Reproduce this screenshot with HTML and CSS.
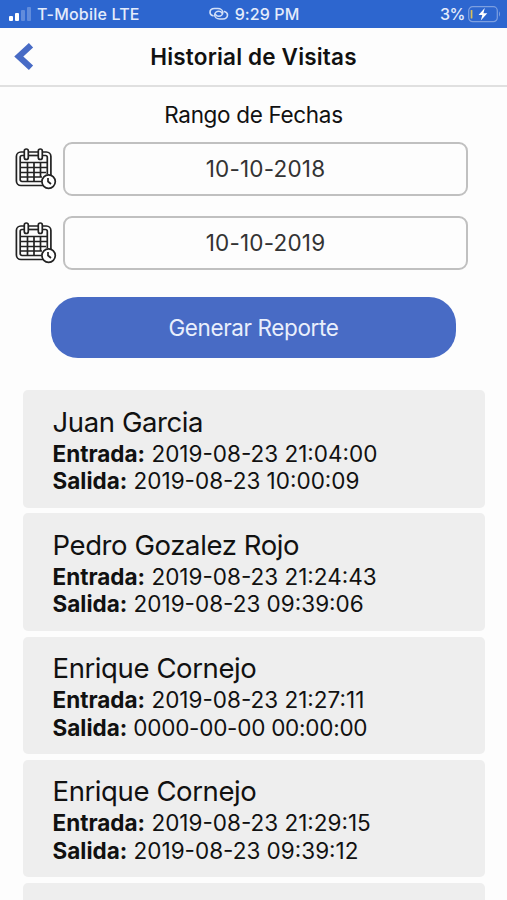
FILE: index.html
```
<!DOCTYPE html>
<html lang="es">
  <head>
    <meta charset="UTF-8" />
    <meta name="viewport" content="width=device-width, initial-scale=1.0" />
    <title>Historial de Visitas</title>
    <link rel="stylesheet" href="styles.css">
  </head>
  <body>
    <!-- Shared calendar icon -->
    <svg class="sprite" width="0" height="0">
      <symbol id="calendar" viewBox="0 0 42 42">
        <g fill="none" stroke="#222" stroke-width="1.7">
          <rect x="1.4" y="4" width="34.5" height="33.5" rx="4.5" />
          <path d="M9.5 7.5H7a1.800 1.800 0 0 0-1.800 1.800v22.400a1.800 1.800 0 0 0 1.800 1.800h22M27.500 7.500h3a1.800 1.800 0 0 1 1.800 1.800v17" />
          <path d="M5 14.500h27M5 19.500h27M5 24.500h26M5 29h22M12.500 14.500v19M19 14.500v19M25.500 14.500v15" />
          <path d="M14 7.500h9" />
          <rect x="9.300" y="1" width="4" height="10.500" rx="2" fill="#fff" />
          <rect x="23.300" y="1" width="4" height="10.500" rx="2" fill="#fff" />
          <circle cx="33.600" cy="33.600" r="6.700" fill="#fff" />
          <path d="M33 30v3.500l3 2.500" />
        </g>
      </symbol>
    </svg>

    <div class="status-bar">
      <div class="status-left">
        <svg width="24" height="14" viewBox="0 0 24 14" fill="#fff">
          <rect x="0" y="9" width="4" height="5" rx="1" />
          <rect x="6" y="6" width="4" height="8" rx="1" />
          <rect x="12" y="3" width="4" height="11" rx="1" opacity="0.25" />
          <rect x="18" y="0" width="4" height="14" rx="1" opacity="0.25" />
        </svg>
        <span class="carrier">T-Mobile LTE</span>
      </div>
      <div class="status-center">
        <svg width="20" height="14" viewBox="0 0 20 14" fill="none" stroke="#d3e0f8" stroke-width="1.6" stroke-linecap="round">
          <path d="M4 8.800C2 8.300 1 7 1 5.300 1 3 3 1.500 5.500 1.500h3.300c3 0 5 2 5 4 0 2.200-2 3.700-4 3.700-1.600 0-2.800-.8-3.200-1.700" />
          <path d="M15.500 4.500c2 .6 3 1.800 3 3.600 0 2.300-2 3.900-4.500 3.900h-3.300c-3 0-5-2-5-4 0-2.200 2-3.700 4-3.700 1.600 0 2.800.8 3.200 1.700" />
        </svg>
        <span class="time">9:29 PM</span>
      </div>
      <div class="status-right">
        <span class="percent">3%</span>
        <svg width="33" height="17" viewBox="0 0 33 17">
          <rect x="0.700" y="0.700" width="28.600" height="15" rx="4" fill="none" stroke="#7d9fe0" stroke-width="1.200" />
          <path d="M31 5.500c1.300.5 1.300 4.500 0 5z" fill="#7d9fe0" />
          <rect x="2.700" y="4" width="1.700" height="8.500" rx="0.600" fill="#d9bf5a" />
          <path d="M16.800 2 10.500 9h3.800l-1.500 5.500L19.300 7.300h-3.900z" fill="#fff" />
        </svg>
      </div>
    </div>

    <div class="header">
      <svg class="back" width="20" height="30" viewBox="0 0 20 30">
        <path d="M17 3.200 4.800 14.500l12.200 11.300" fill="none" stroke="#486bc5" stroke-width="6.200" />
      </svg>
      <h1>Historial de Visitas</h1>
    </div>

    <div class="filters">
      <p class="label">Rango de Fechas</p>
      <div class="date-row">
        <svg class="icon" width="42" height="42"><use href="#calendar" /></svg>
        <div class="date-input">10-10-2018</div>
      </div>
      <div class="date-row">
        <svg class="icon" width="42" height="42"><use href="#calendar" /></svg>
        <div class="date-input">10-10-2019</div>
      </div>
      <button class="btn">Generar Reporte</button>
    </div>

    <div class="list">
      <div class="card">
        <h2>Juan Garcia</h2>
        <p><strong>Entrada:</strong> 2019-08-23 21:04:00</p>
        <p><strong>Salida:</strong> 2019-08-23 10:00:09</p>
      </div>
      <div class="card">
        <h2>Pedro Gozalez Rojo</h2>
        <p><strong>Entrada:</strong> 2019-08-23 21:24:43</p>
        <p><strong>Salida:</strong> 2019-08-23 09:39:06</p>
      </div>
      <div class="card">
        <h2>Enrique Cornejo</h2>
        <p><strong>Entrada:</strong> 2019-08-23 21:27:11</p>
        <p class="empty"><strong>Salida:</strong> 0000-00-00 00:00:00</p>
      </div>
      <div class="card">
        <h2>Enrique Cornejo</h2>
        <p><strong>Entrada:</strong> 2019-08-23 21:29:15</p>
        <p><strong>Salida:</strong> 2019-08-23 09:39:12</p>
      </div>
      <div class="card last"></div>
    </div>
  </body>
</html>
```

FILE: styles.css
```
* {
  margin: 0;
  padding: 0;
  box-sizing: border-box;
}

body {
  height: 900px;
  overflow: hidden;
  background-color: #fdfdfd;
  color: #111;
  font-family: Inter, "Liberation Sans", sans-serif;
}

.sprite {
  display: block;
}

.status-bar {
  display: grid;
  grid-template-columns: 1fr auto 1fr;
  align-items: center;
  height: 28px;
  padding: 0 6px 0 9px;
  background-color: #2d66cf;
  color: #e4ecfb;
  font-size: 16px;
  font-weight: 500;
}

.status-left,
.status-center,
.status-right {
  display: flex;
  align-items: center;
}

.status-left {
  gap: 4px;
}

.carrier {
  letter-spacing: 0.2px;
}

.status-center {
  gap: 6px;
  margin-right: 2px;
}

.time {
  letter-spacing: 0.1px;
}

.status-right {
  justify-content: flex-end;
  gap: 3px;
}

.percent {
  letter-spacing: -0.5px;
}

.header {
  display: grid;
  grid-template-columns: 40px 1fr 40px;
  align-items: center;
  height: 59px;
  border-bottom: 2px solid #e0e0e0;
}

.back {
  margin-left: 14px;
}

h1 {
  font-size: 22.5px;
  font-weight: 600;
  letter-spacing: 0.18px;
  text-align: center;
}

.filters {
  display: flex;
  flex-direction: column;
  padding: 14px 39px 0 15px;
}

.label {
  margin-bottom: 13px;
  padding-left: 24px;
  font-size: 22.5px;
  letter-spacing: -0.33px;
  line-height: 28px;
  text-align: center;
}

.date-row {
  display: flex;
  align-items: center;
  gap: 6px;
  margin-bottom: 20px;
}

.date-input {
  flex: 1;
  height: 54px;
  border: 2px solid #c0c0c0;
  border-radius: 9px;
  color: #333;
  font-size: 22.5px;
  letter-spacing: 0.2px;
  line-height: 50px;
  text-align: center;
}

.btn {
  height: 61px;
  margin: 6.5px 12px 0 36px;
  border: none;
  border-radius: 27px;
  background-color: #486bc5;
  color: #e9effc;
  font-family: inherit;
  font-size: 22.5px;
  letter-spacing: -0.38px;
}

.list {
  display: flex;
  flex-direction: column;
  gap: 5.7px;
  padding: 32.5px 22px 0 22.5px;
}

.card {
  height: 117.6px;
  padding: 14.5px 30px 0;
  border-radius: 5px;
  background-color: #eee;
}

/* only the top of the next card is on screen */
.card.last {
  height: 17px;
  padding: 0;
  border-radius: 5px 5px 0 0;
}

.card h2 {
  font-size: 27.5px;
  font-weight: 400;
  letter-spacing: -0.4px;
  line-height: 35px;
}

.card p {
  font-size: 22.5px;
  line-height: 27.6px;
  white-space: nowrap;
}

.card p.empty {
  letter-spacing: -0.25px;
}

.card strong {
  font-weight: 700;
  letter-spacing: 0;
}
```
